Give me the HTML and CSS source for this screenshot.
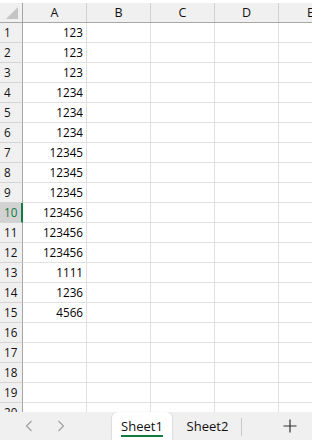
FILE: index.html
```html
<!DOCTYPE html>
<html lang="en">
<head>
    <meta charset="UTF-8">
    <meta name="viewport" content="width=device-width, initial-scale=1.0">
    <title>Book1 - Sheet1</title>
    <link rel="stylesheet" href="styles.css">
</head>
<body>
    <div class="sheet">
        <div class="row head">
            <div class="corner"><span class="tri"></span></div>
            <div class="col">A</div>
            <div class="col">B</div>
            <div class="col">C</div>
            <div class="col">D</div>
            <div class="col">E</div>
        </div>
        <div class="row"><div class="rh">1</div><div class="cell num">123</div><div class="cell"></div><div class="cell"></div><div class="cell"></div><div class="cell"></div></div>
        <div class="row"><div class="rh">2</div><div class="cell num">123</div><div class="cell"></div><div class="cell"></div><div class="cell"></div><div class="cell"></div></div>
        <div class="row"><div class="rh">3</div><div class="cell num">123</div><div class="cell"></div><div class="cell"></div><div class="cell"></div><div class="cell"></div></div>
        <div class="row"><div class="rh">4</div><div class="cell num">1234</div><div class="cell"></div><div class="cell"></div><div class="cell"></div><div class="cell"></div></div>
        <div class="row"><div class="rh">5</div><div class="cell num">1234</div><div class="cell"></div><div class="cell"></div><div class="cell"></div><div class="cell"></div></div>
        <div class="row"><div class="rh">6</div><div class="cell num">1234</div><div class="cell"></div><div class="cell"></div><div class="cell"></div><div class="cell"></div></div>
        <div class="row"><div class="rh">7</div><div class="cell num">12345</div><div class="cell"></div><div class="cell"></div><div class="cell"></div><div class="cell"></div></div>
        <div class="row"><div class="rh">8</div><div class="cell num">12345</div><div class="cell"></div><div class="cell"></div><div class="cell"></div><div class="cell"></div></div>
        <div class="row"><div class="rh">9</div><div class="cell num">12345</div><div class="cell"></div><div class="cell"></div><div class="cell"></div><div class="cell"></div></div>
        <div class="row"><div class="rh active">10</div><div class="cell num">123456</div><div class="cell"></div><div class="cell"></div><div class="cell"></div><div class="cell"></div></div>
        <div class="row"><div class="rh">11</div><div class="cell num">123456</div><div class="cell"></div><div class="cell"></div><div class="cell"></div><div class="cell"></div></div>
        <div class="row"><div class="rh">12</div><div class="cell num">123456</div><div class="cell"></div><div class="cell"></div><div class="cell"></div><div class="cell"></div></div>
        <div class="row"><div class="rh">13</div><div class="cell num">1111</div><div class="cell"></div><div class="cell"></div><div class="cell"></div><div class="cell"></div></div>
        <div class="row"><div class="rh">14</div><div class="cell num">1236</div><div class="cell"></div><div class="cell"></div><div class="cell"></div><div class="cell"></div></div>
        <div class="row"><div class="rh">15</div><div class="cell num">4566</div><div class="cell"></div><div class="cell"></div><div class="cell"></div><div class="cell"></div></div>
        <div class="row"><div class="rh">16</div><div class="cell"></div><div class="cell"></div><div class="cell"></div><div class="cell"></div><div class="cell"></div></div>
        <div class="row"><div class="rh">17</div><div class="cell"></div><div class="cell"></div><div class="cell"></div><div class="cell"></div><div class="cell"></div></div>
        <div class="row"><div class="rh">18</div><div class="cell"></div><div class="cell"></div><div class="cell"></div><div class="cell"></div><div class="cell"></div></div>
        <div class="row"><div class="rh">19</div><div class="cell"></div><div class="cell"></div><div class="cell"></div><div class="cell"></div><div class="cell"></div></div>
        <div class="row"><div class="rh">20</div><div class="cell"></div><div class="cell"></div><div class="cell"></div><div class="cell"></div><div class="cell"></div></div>
    </div>

    <div class="tabbar">
        <div class="nav">
            <svg class="arrow" width="8" height="12" viewBox="0 0 8 12"><path d="M6.5 1 L1.5 6 L6.5 11" fill="none" stroke="#a0a0a0" stroke-width="1.2"/></svg>
            <svg class="arrow" width="8" height="12" viewBox="0 0 8 12"><path d="M1.5 1 L6.5 6 L1.5 11" fill="none" stroke="#a0a0a0" stroke-width="1.2"/></svg>
        </div>
        <div class="tab current"><span>Sheet1</span></div>
        <div class="tab"><span>Sheet2</span></div>
        <div class="add">
            <svg width="14" height="14" viewBox="0 0 14 14"><path d="M7 0.5 V13.5 M0.5 7 H13.5" stroke="#333" stroke-width="1.2"/></svg>
        </div>
    </div>
</body>
</html>
```

FILE: styles.css
```css
body {
    margin: 0;
    width: 312px;
    height: 440px;
    overflow: hidden;
    background-color: #fff;
    font-family: "Open Sans", "Noto Sans", sans-serif;
    color: #000;
}
.sheet {
    height: 412px;
    overflow: hidden;
    padding-top: 3px;
    box-sizing: border-box;
}
.row {
    display: flex;
    height: 20px;
    box-sizing: border-box;
    border-bottom: 1px solid #e1e1e1;
    width: 343px;
}
.row.head {
    height: 20px;
    background-color: #f0f0f0;
    border-bottom: 1px solid #a6a6a6;
}
.corner {
    position: relative;
    width: 23px;
    flex: none;
    box-sizing: border-box;
    border-right: 1px solid #a6a6a6;
}
/* little grey triangle in the select-all corner */
.tri {
    position: absolute;
    right: 4px;
    bottom: 3px;
    width: 0;
    height: 0;
    border-left: 12px solid transparent;
    border-bottom: 12px solid #c4c4c4;
}
.col {
    width: 64px;
    flex: none;
    box-sizing: border-box;
    border-right: 1px solid #d0d0d0;
    text-align: center;
    font-size: 12.5px;
    line-height: 19px;
    color: #111;
}
.rh {
    width: 23px;
    flex: none;
    box-sizing: border-box;
    background-color: #f0f0f0;
    border-right: 1px solid #a6a6a6;
    border-bottom: 1px solid #d4d4d4;
    margin-bottom: -1px;
    padding-left: 4px;
    font-size: 11.7px;
    line-height: 19px;
    color: #111;
}
.rh.active {
    background-color: #d2d2d2;
    color: #107c41;
    border-right: 2px solid #107c41;
}
.cell {
    width: 64px;
    flex: none;
    box-sizing: border-box;
    border-right: 1px solid #e1e1e1;
    font-size: 11.7px;
    line-height: 19px;
    color: #000;
}
.num {
    text-align: right;
    padding-right: 3px;
}

.tabbar {
    display: flex;
    align-items: stretch;
    height: 28px;
    background-color: #f0f0f0;
}
.nav {
    width: 112px;
    flex: none;
    display: flex;
    align-items: center;
    gap: 24px;
    padding-left: 25px;
    box-sizing: border-box;
}
.tab {
    width: 69px;
    flex: none;
    display: flex;
    align-items: center;
    justify-content: center;
    font-size: 13px;
    color: #111;
    position: relative;
}
.tab::after {
    content: "";
    position: absolute;
    right: 0;
    top: 6px;
    bottom: 4px;
    border-right: 1px solid #c8c8c8;
}
.tab.current {
    width: 60px;
    background-color: #fff;
    border-radius: 6px 6px 0 0;
    box-shadow: -1px 0 1px rgba(0, 0, 0, 0.08), 1px 0 1px rgba(0, 0, 0, 0.08);
    margin-right: 1px;
}
.tab.current::after {
    display: none;
}
.tab.current span {
    border-bottom: 2px solid #107c41;
    line-height: 18px;
    padding-top: 2px;
}
.add {
    flex: 1;
    display: flex;
    align-items: center;
    justify-content: flex-end;
    padding-right: 15px;
}
```
